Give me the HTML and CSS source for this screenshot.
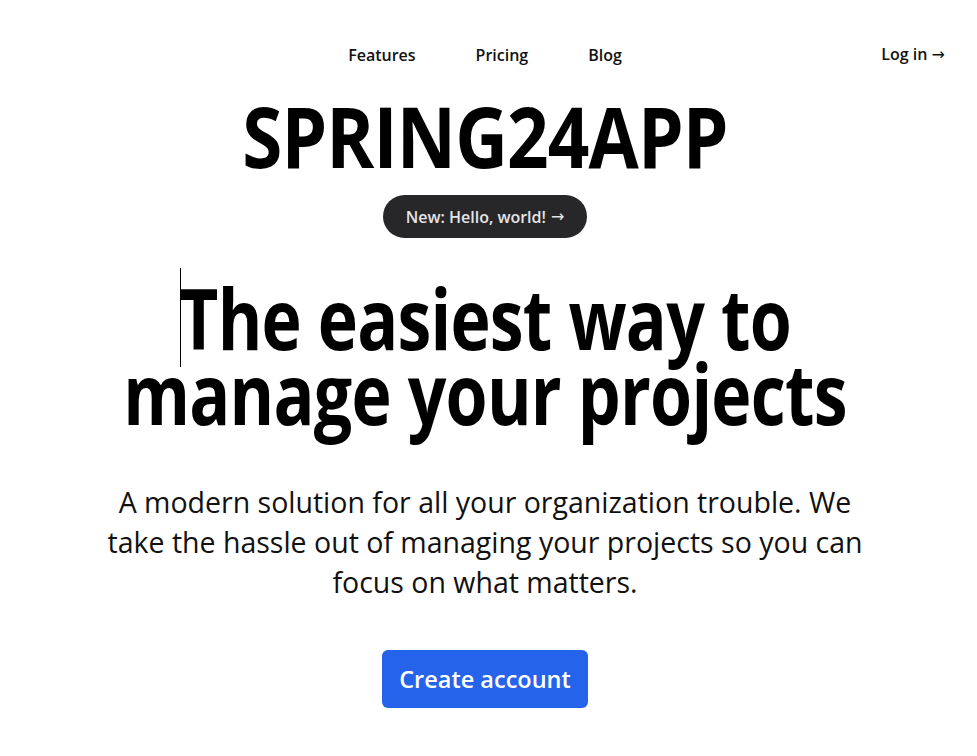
FILE: index.html
```html
<!DOCTYPE html>
<html lang="en">
<head>
<meta charset="utf-8">
<title>Spring24App</title>
<link rel="stylesheet" href="styles.css">
</head>
<body>
<div class="page">
  <header class="header">
    <div class="header-side"></div>
    <nav class="nav">
      <a href="#" class="nav-link">Features</a>
      <a href="#" class="nav-link">Pricing</a>
      <a href="#" class="nav-link">Blog</a>
    </nav>
    <div class="header-side header-right">
      <a href="#" class="nav-link">Log in <span class="arrow" aria-hidden="true">→</span></a>
    </div>
  </header>
  <main class="hero">
    <div class="brand">SPRING24APP</div>
    <a href="#" class="badge">New: Hello, world! <span class="arrow" aria-hidden="true">→</span></a>
    <div class="headline-wrap">
      <span class="caret" aria-hidden="true"></span>
      <h1 class="headline">The easiest way to<br>manage your projects</h1>
    </div>
    <p class="lead">A modern solution for all your organization trouble. We take the hassle out of managing your projects so you can focus on what matters.</p>
    <a href="#" class="cta">Create account</a>
  </main>
</div>
</body>
</html>
```

FILE: styles.css
```css
* { box-sizing: border-box; }
html, body { margin: 0; padding: 0; background: #ffffff; }
body {
  font-family: "Open Sans", "Noto Sans", sans-serif;
  color: #000000;
}
a { text-decoration: none; color: inherit; }

.page {
  padding: 0 32px 0 25px;
}

.header {
  display: grid;
  grid-template-columns: 1fr auto 1fr;
  align-items: center;
  padding-top: 39px;
  height: 69px;
}
.header-right { display: flex; justify-content: flex-end; }
.nav {
  display: flex;
  gap: 60px;
}
.nav-link {
  font-size: 16px;
  font-weight: 600;
  line-height: 30px;
  color: #111111;
}
.arrow {
  font-family: "DejaVu Sans", sans-serif;
  font-weight: 400;
}

.hero {
  display: flex;
  flex-direction: column;
  align-items: center;
  text-align: center;
}
.brand {
  margin-top: 25px;
  font-size: 84px;
  font-weight: 700;
  line-height: 84px;
  letter-spacing: -1px;
  transform: scaleX(0.867);
}
.badge {
  margin-top: 17px;
  height: 43px;
  display: flex;
  align-items: center;
  gap: 5px;
  padding: 0 23px;
  border-radius: 999px;
  background: #27272a;
  color: #e4e4e7;
  font-size: 16px;
  font-weight: 600;
}
.headline-wrap {
  position: relative;
  align-self: stretch;
  margin-top: 42px;
}
.caret {
  position: absolute;
  left: calc(50% - 305px);
  top: -12px;
  width: 1px;
  height: 99px;
  background: #000000;
}
.headline {
  margin: 0;
  font-size: 84px;
  font-weight: 700;
  line-height: 75px;
  letter-spacing: -1px;
  transform: scaleX(0.81);
}
.lead {
  margin: 52px 0 0;
  max-width: 780px;
  font-size: 28.5px;
  line-height: 40px;
  font-weight: 400;
  color: #111111;
}
.cta {
  margin-top: 48px;
  height: 58px;
  display: flex;
  align-items: center;
  padding: 0 17px;
  border-radius: 6px;
  background: #2563eb;
  color: #ffffff;
  font-size: 23.5px;
  font-weight: 600;
}
```
